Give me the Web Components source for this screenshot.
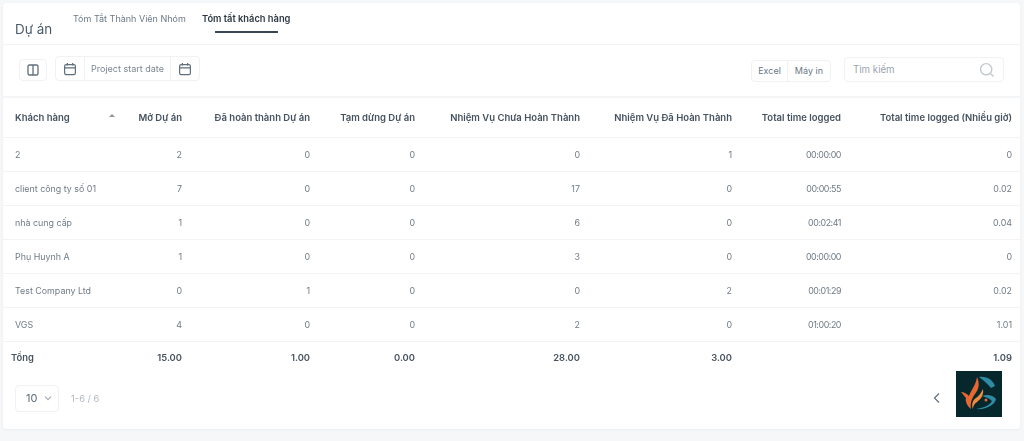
<!DOCTYPE html>
<html lang="vi">
<head>
<meta charset="utf-8">
<title>Dự án</title>
<style>
  html, body { margin: 0; height: 100%; background: #f6f7f8; overflow: hidden; }
  body { padding: 3px 4px 0 3px; box-sizing: border-box; font-family: Inter, "Noto Sans", sans-serif; color: #415464; }
</style>
</head>
<body>
<project-card>
  <tab-header slot="header"></tab-header>
  <report-toolbar slot="toolbar"></report-toolbar>
  <report-table slot="table"></report-table>
  <table-footer slot="footer"></table-footer>
</project-card>

<script>
const calendarIcon = `<svg width="14" height="14" viewBox="0 0 14 14" fill="none" stroke="#5f6f7c" stroke-width="1.2"><rect x="1.6" y="2.6" width="10.8" height="10" rx="1.6"/><path d="M1.6 5.8h10.8M4.4 1v2.6M9.6 1v2.6"/></svg>`;

class ProjectCard extends HTMLElement {
  constructor() {
    super();
    this.attachShadow({ mode: "open" });
    this.shadowRoot.innerHTML = `
      <style>
        :host {
          display: block;
          width: 1017px;
          height: 426px;
          background: #fff;
          border-radius: 4px;
          box-shadow: 0 1px 3px rgba(0, 0, 0, .05);
          filter: blur(.3px);
        }
      </style>
      <slot name="header"></slot>
      <slot name="toolbar"></slot>
      <slot name="table"></slot>
      <slot name="footer"></slot>
    `;
  }
}
customElements.define("project-card", ProjectCard);

class TabHeader extends HTMLElement {
  constructor() {
    super();
    this.attachShadow({ mode: "open" });
    this.shadowRoot.innerHTML = `
      <style>
        :host {
          display: flex;
          height: 41px;
          border-bottom: 1px solid #f2f3f5;
          padding-left: 12px;
        }
        h4 { margin: 16px 0 0; font-size: 13.4px; font-weight: 400; line-height: 20px; color: #4a5a68; width: 58px; }
        .tab { font-size: 9px; line-height: 14px; padding-top: 9px; color: #6b7885; position: relative; white-space: nowrap; }
        .first { width: 112px; margin-right: 17px; }
        .active { font-size: 9.3px; font-weight: 600; color: #2c3742; }
        .active::after {
          content: "";
          position: absolute;
          left: 13px;
          right: 12px;
          top: 28px;
          height: 2px;
          background: #3a4652;
        }
      </style>
      <h4>Dự án</h4>
      <div class="tab first">Tóm Tắt Thành Viên Nhóm</div>
      <div class="tab active">Tóm tất khách hàng</div>
    `;
  }
}
customElements.define("tab-header", TabHeader);

class ReportToolbar extends HTMLElement {
  constructor() {
    super();
    this.attachShadow({ mode: "open" });
    this.shadowRoot.innerHTML = `
      <style>
        :host {
          display: flex;
          align-items: flex-start;
          height: 53px;
          box-sizing: border-box;
          padding: 11px 16px 0 16px;
          border-bottom: 2px solid #f4f5f6;
          font-size: 9px;
          color: #6b7885;
        }
        .box { border: 1px solid #f0f1f3; border-radius: 4px; display: flex; align-items: center; box-sizing: border-box; background: #fff; }
        .columns { width: 28px; height: 22px; justify-content: center; margin: 3px 8px 0 0; }
        .dates { height: 25px; width: 145px; }
        .ic { width: 28px; height: 100%; display: flex; align-items: center; justify-content: center; flex: none; }
        .lbl { flex: 1; text-align: center; line-height: 23px; border-left: 1px solid #f0f1f3; border-right: 1px solid #f0f1f3; white-space: nowrap; color: #7a8692; }
        .spacer { flex: 1; }
        .export { height: 22px; margin: 4px 13px 0 0; }
        .export span { padding: 0 7px; line-height: 20px; }
        .export span:first-child { padding: 0 6px; }
        .export span + span { border-left: 1px solid #f0f1f3; }
        .search { width: 160px; height: 25px; margin-top: 1px; padding: 0 8px; justify-content: space-between; color: #9aa4ae; font-size: 9.7px; }
      </style>
      <div class="box columns">
        <svg width="14" height="14" viewBox="0 0 14 14" fill="none" stroke="#5f6f7c" stroke-width="1.3"><rect x="2" y="2" width="10" height="10" rx="1.6"/><path d="M7 2v10"/></svg>
      </div>
      <div class="box dates">
        <span class="ic">${calendarIcon}</span>
        <span class="lbl">Project start date</span>
        <span class="ic">${calendarIcon}</span>
      </div>
      <div class="spacer"></div>
      <div class="box export"><span>Excel</span><span>Máy in</span></div>
      <div class="box search">
        <span>Tìm kiếm</span>
        <svg width="16" height="16" viewBox="0 0 16 16" fill="none" stroke="#c4cad0" stroke-width="1.4"><circle cx="7.2" cy="7.2" r="5.6"/><path d="M11.4 11.4l3.2 3.2"/></svg>
      </div>
    `;
  }
}
customElements.define("report-toolbar", ReportToolbar);

class ReportTable extends HTMLElement {
  constructor() {
    super();
    this.attachShadow({ mode: "open" });

    const headers = ["Khách hàng", "Mở Dự án", "Đã hoàn thành Dự án", "Tạm dừng Dự án", "Nhiệm Vụ Chưa Hoàn Thành", "Nhiệm Vụ Đã Hoàn Thành", "Total time logged", "Total time logged (Nhiều giờ)"];
    const rows = [
      ["2", 2, 0, 0, 0, 1, "00:00:00", 0],
      ["client công ty số 01", 7, 0, 0, 17, 0, "00:00:55", 0.02],
      ["nhà cung cấp", 1, 0, 0, 6, 0, "00:02:41", 0.04],
      ["Phụ Huynh A", 1, 0, 0, 3, 0, "00:00:00", 0],
      ["Test Company Ltd", 0, 1, 0, 0, 2, "00:01:29", 0.02],
      ["VGS", 4, 0, 0, 2, 0, "01:00:20", 1.01]
    ];
    const totals = ["Tổng", "15.00", "1.00", "0.00", "28.00", "3.00", "", "1.09"];
    const widths = [124, 63, 128, 105, 165, 152, 109, 171];

    const cells = (list, tag) => list.map((v) => `<${tag}>${v}</${tag}>`).join("");

    this.shadowRoot.innerHTML = `
      <style>
        :host { display: block; }
        table { width: 1017px; border-collapse: collapse; table-layout: fixed; font-size: 8.9px; }
        th, td { padding: 0 8px; text-align: right; white-space: nowrap; box-sizing: border-box; }
        th:first-child, td:first-child { text-align: left; padding-left: 12px; }
        th { height: 39px; font-size: 9.5px; font-weight: 600; color: #46525e; border-bottom: 1px solid #f2f3f5; position: relative; }
        th:first-child::after {
          content: "";
          position: absolute;
          left: 106px;
          top: 16px;
          border: 3px solid transparent;
          border-top: 0;
          border-bottom: 3px solid #8b96a0;
        }
        td { height: 34px; color: #6f7a85; border-bottom: 1px solid #f2f3f5; }
        tbody td:nth-child(7) { letter-spacing: -.45px; }
        tfoot td { height: 32px; font-size: 9.4px; font-weight: 600; color: #46525e; border-bottom: 0; }
        tfoot td:first-child { padding-left: 8px; }
      </style>
      <table>
        <colgroup>${widths.map((w) => `<col style="width:${w}px">`).join("")}</colgroup>
        <thead><tr>${cells(headers, "th")}</tr></thead>
        <tbody>${rows.map((r) => `<tr>${cells(r, "td")}</tr>`).join("")}</tbody>
        <tfoot><tr>${cells(totals, "td")}</tr></tfoot>
      </table>
    `;
  }
}
customElements.define("report-table", ReportTable);

class TableFooter extends HTMLElement {
  constructor() {
    super();
    this.attachShadow({ mode: "open" });
    this.shadowRoot.innerHTML = `
      <style>
        :host {
          display: flex;
          align-items: center;
          position: relative;
          height: 53px;
          box-sizing: border-box;
          padding: 0 12px 3px 12px;
          font-size: 9.4px;
          color: #b0b8bf;
        }
        .size {
          width: 44px; height: 27px; box-sizing: border-box;
          border: 1px solid #f0f1f3; border-radius: 4px;
          display: flex; align-items: center; justify-content: space-between;
          padding: 0 6px 0 10px; font-size: 11px; color: #5d6b78;
          margin-right: 12px;
        }
        .spacer { flex: 1; }
        .logo { position: absolute; left: 953px; top: -2px; width: 46px; height: 46px; display: block; }
        .prev { margin-right: 66px; display: block; }
      </style>
      <div class="size">10
        <svg width="8" height="8" viewBox="0 0 8 8" fill="none" stroke="#a3adb6" stroke-width="1.2"><path d="M1 2.6l3 3 3-3"/></svg>
      </div>
      <span>1-6 / 6</span>
      <div class="spacer"></div>
      <svg class="prev" width="10" height="12" viewBox="0 0 10 12" fill="none" stroke="#5f6f7c" stroke-width="1.2"><path d="M7 1.5L2.5 6 7 10.5"/></svg>
      <svg class="logo" viewBox="0 0 46 46">
        <rect width="46" height="46" fill="#06282c"/>
        <path d="M23 6C31 5 37 9 39 15L35 17C32 13 28 10 23 6z" fill="#2f8aa3"/>
        <path d="M21 6C24 13 23 18 19 23C16 27 14 32 15 38C11 35 9 30 10 27C8 25 7 23 5 21C8 21 11 23 13 25C15 19 20 14 21 6z" fill="#e8662f"/>
        <path d="M27 18C28 24 25 28 21 31C18 33 17 35 17 38C15 33 17 29 20 27C23 25 25 22 27 18z" fill="#f08a3c"/>
        <path d="M26 25C31 23 37 24 40 28C39 34 30 39 20 38C27 37 33 35 36 30C33 27 29 26 26 25z" fill="#2f8aa3"/>
        <circle cx="30" cy="29" r="1.5" fill="#e8662f"/>
      </svg>
    `;
  }
}
customElements.define("table-footer", TableFooter);
</script>
</body>
</html>
